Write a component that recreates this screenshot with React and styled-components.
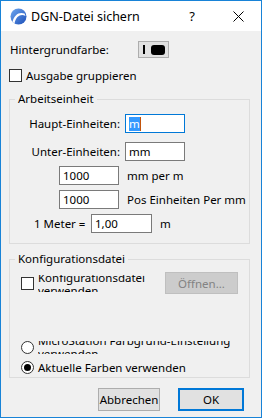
import React from 'react';
import styled, { createGlobalStyle } from 'styled-components';

const Global = createGlobalStyle`
    html, body {
        margin: 0;
        padding: 0;
        background: #f0f0f0;
    }
    body {
        font-family: "Noto Sans", "Open Sans", sans-serif;
        font-size: 11.5px;
        color: #000;
    }
`

const Window = styled.div`
    width: 262px;
    height: 418px;
    box-sizing: border-box;
    border: 1px solid #1883d7;
    background: #f0f0f0;
    display: flex;
    flex-direction: column;
`

const TitleBar = styled.div`
    height: 30px;
    background: #fff;
    display: flex;
    align-items: center;
    padding-left: 9px;
    flex-shrink: 0;
`

const Title = styled.span`
    margin-left: 4px;
    font-size: 12.5px;
    flex: 1;
`

const TitleButton = styled.span`
    width: ${p => p.w}px;
    display: flex;
    justify-content: center;
    align-items: center;
    font-size: 13px;
`

const Body = styled.div`
    padding: 10px 11px 0 8px;
    display: flex;
    flex-direction: column;
    flex: 1;
`

const Row = styled.div`
    display: flex;
    align-items: center;
    margin-top: ${p => p.mt || 0}px;
    padding-left: ${p => p.pl || 0}px;
`

const Label = styled.span`
    width: ${p => p.w ? p.w + 'px' : 'auto'};
    text-align: ${p => p.right ? 'right' : 'left'};
    margin-left: ${p => p.ml || 0}px;
    white-space: nowrap;
`

const Swatch = styled.div`
    width: 31px;
    height: 17px;
    box-sizing: border-box;
    border: 1px solid #adadad;
    background: #e1e1e1;
    display: flex;
    align-items: center;
    padding-left: 4px;
    span.bar {
        width: 2px;
        height: 9px;
        background: #000;
    }
    span.fill {
        margin-left: 6px;
        width: 14px;
        height: 10px;
        border-radius: 3px;
        background: #000;
    }
`

const Check = styled.span`
    width: 13px;
    height: 13px;
    box-sizing: border-box;
    border: 1px solid #333;
    background: #fff;
    flex-shrink: 0;
`

const Radio = styled.span`
    width: 13px;
    height: 13px;
    box-sizing: border-box;
    border: 1px solid #333;
    border-radius: 50%;
    background: #fff;
    flex-shrink: 0;
    display: flex;
    align-items: center;
    justify-content: center;
    &::after {
        content: '';
        width: 7px;
        height: 7px;
        border-radius: 50%;
        background: ${p => p.checked ? '#000' : 'transparent'};
    }
`

const Group = styled.fieldset`
    margin: ${p => p.mt || 0}px 0 0 0;
    padding: 0;
    border: 1px solid #dcdcdc;
    min-width: 0;
    height: ${p => p.h}px;
    box-sizing: border-box;
    display: flex;
    flex-direction: column;
`

const Legend = styled.legend`
    margin-left: 5px;
    padding: 0 3px;
    line-height: 16px;
    height: 16px;
`

const Input = styled.div`
    width: ${p => p.w || 60}px;
    height: 19px;
    box-sizing: border-box;
    border: 1px solid ${p => p.focus ? '#0078d7' : '#7a7a7a'};
    background: #fff;
    display: flex;
    align-items: center;
    padding-left: 3px;
    margin-left: ${p => p.ml || 0}px;
    flex-shrink: 0;
    .sel {
        background: #3399ff;
        color: #fff;
        border-right: 1px solid #c2540b;
        line-height: 14px;
    }
`

// static text that Windows clips to its box: only part of the two lines shows
const Clipped = styled.div`
    width: ${p => p.w}px;
    height: ${p => p.h}px;
    overflow: hidden;
    margin-left: ${p => p.ml || 4}px;
    line-height: 13px;
    flex-shrink: 0;
    span {
        display: block;
        white-space: nowrap;
    }
    span:first-child {
        margin-top: ${p => p.shift}px;
    }
`

const Button = styled.div`
    width: ${p => p.w}px;
    height: ${p => p.h || 23}px;
    box-sizing: border-box;
    border: ${p => p.primary ? '2px' : '1px'} solid;
    border-color: ${p => p.disabled ? '#bfbfbf' : p.primary ? '#0078d7' : '#adadad'};
    background: ${p => p.disabled ? '#cccccc' : '#e1e1e1'};
    color: ${p => p.disabled ? '#838383' : '#000'};
    display: flex;
    align-items: center;
    justify-content: center;
    margin-left: ${p => p.ml || 0}px;
    flex-shrink: 0;
`

const Footer = styled.div`
    display: flex;
    justify-content: flex-end;
    margin-top: 10px;
    padding-right: 6px;
`

const AppIcon = () => (
    <svg width="17" height="17" viewBox="0 0 17 17">
        <defs>
            <linearGradient id="g" x1="0" y1="0" x2="1" y2="1">
                <stop offset="0" stopColor="#6fa8f0" />
                <stop offset="1" stopColor="#1c4fb8" />
            </linearGradient>
        </defs>
        <circle cx="8.5" cy="8.5" r="8" fill="url(#g)" />
        <path d="M2.5 14 C4 7 9 3.5 14.5 5.5 L15.5 8 C11 5.5 6 8 4.5 15.5 Z" fill="#fff" />
    </svg>
)

const CloseIcon = () => (
    <svg width="11" height="11" viewBox="0 0 11 11">
        <path d="M0.5 0.5 L10.5 10.5 M10.5 0.5 L0.5 10.5" stroke="#000" strokeWidth="1" />
    </svg>
)

const App = () => {
    return (
        <>
            <Global />
            <Window>
                <TitleBar>
                    <AppIcon />
                    <Title>DGN-Datei sichern</Title>
                    <TitleButton w={46}>?</TitleButton>
                    <TitleButton w={46}><CloseIcon /></TitleButton>
                </TitleBar>
                <Body>
                    <Row pl={1}>
                        <Label w={128}>Hintergrundfarbe:</Label>
                        <Swatch><span className="bar" /><span className="fill" /></Swatch>
                    </Row>
                    <Row mt={10}>
                        <Check />
                        <Label ml={4}>Ausgabe gruppieren</Label>
                    </Row>

                    <Group mt={8} h={153}>
                        <Legend>Arbeitseinheit</Legend>
                        <Row mt={7}>
                            <Label w={110} right>Haupt-Einheiten:</Label>
                            <Input focus ml={5}><span className="sel">m</span></Input>
                        </Row>
                        <Row mt={9}>
                            <Label w={110} right>Unter-Einheiten:</Label>
                            <Input ml={5}>mm</Input>
                        </Row>
                        <Row mt={5}>
                            <Input ml={49}>1000</Input>
                            <Label ml={8}>mm per m</Label>
                        </Row>
                        <Row mt={5}>
                            <Input ml={49}>1000</Input>
                            <Label ml={8}>Pos Einheiten Per mm</Label>
                        </Row>
                        <Row mt={5}>
                            <Label ml={24} w={57}>1 Meter =</Label>
                            <Input w={61}>1,00</Input>
                            <Label ml={8}>m</Label>
                        </Row>
                    </Group>

                    <Group mt={7} h={127}>
                        <Legend>Konfigurationsdatei</Legend>
                        <Row mt={5} pl={11}>
                            <Check />
                            <Clipped w={124} h={17} shift={-4}>
                                <span>Konfigurationsdatei</span>
                                <span>verwenden</span>
                            </Clipped>
                            <Button w={73} h={22} ml={3} disabled>Öffnen...</Button>
                        </Row>
                        <Row mt={47} pl={11}>
                            <Radio />
                            <Clipped w={200} h={13} shift={-7}>
                                <span>MicroStation Farbgrund-Einstellung</span>
                                <span>verwenden</span>
                            </Clipped>
                        </Row>
                        <Row mt={6} pl={11}>
                            <Radio checked />
                            <Label ml={4}>Aktuelle Farben verwenden</Label>
                        </Row>
                    </Group>

                    <Footer>
                        <Button w={62}>Abbrechen</Button>
                        <Button w={66} ml={18} primary>OK</Button>
                    </Footer>
                </Body>
            </Window>
        </>
    )
}

export default App;
